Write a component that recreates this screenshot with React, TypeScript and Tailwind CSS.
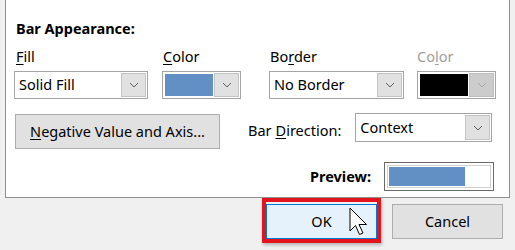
import React from 'react';

const Chevron = ({ disabled }: { disabled?: boolean }) => (
  <svg width="10" height="6" viewBox="0 0 10 6" fill="none">
    <path d="M1 1 L5 5 L9 1" stroke={disabled ? '#a8a8a8' : '#606060'} strokeWidth="1" />
  </svg>
);

const DropButton = ({ disabled }: { disabled?: boolean }) => (
  <div
    className={`w-[25px] h-full flex items-center justify-center border ${
      disabled ? 'bg-[#cccccc] border-[#bfbfbf]' : 'bg-[#e1e1e1] border-[#c4c4c4]'
    }`}
  >
    <Chevron disabled={disabled} />
  </div>
);

const TextSelect = ({ value, className }: { value: string; className: string }) => (
  <div className={`flex items-stretch border border-[#a5a5a5] bg-white p-[1px] ${className}`}>
    <div className="flex-1 flex items-center pl-[3px] text-[14.5px] text-black">{value}</div>
    <DropButton />
  </div>
);

const ColorSelect = ({ color, disabled }: { color: string; disabled?: boolean }) => (
  <div className="flex items-stretch border border-[#a5a5a5] bg-white p-[1px] h-[28px] w-[79px]">
    <div className="flex-1 border border-white" style={{ backgroundColor: color }} />
    <DropButton disabled={disabled} />
  </div>
);

export default function App() {
  return (
    <div
      className="relative w-[515px] h-[250px] bg-[#f0f0f0] overflow-hidden text-black"
      style={{ fontFamily: '"Noto Sans", "Open Sans", sans-serif' }}
    >
      {/* main panel */}
      <div className="ml-[5px] w-[505px] h-[198px] bg-white border-x border-b border-[#8f8f8f] flex flex-col">
        <div className="pl-[10px] pt-[17px] text-[14.5px] font-bold leading-[22px]">Bar Appearance:</div>

        {/* labels */}
        <div className="flex pl-[8px] mt-[6px] text-[14.5px] leading-[22px]">
          <div className="w-[134px] pl-[2px]"><span className="underline underline-offset-2">F</span>ill</div>
          <div className="w-[78px] ml-[14px] pl-[1px]"><span className="underline underline-offset-2">C</span>olor</div>
          <div className="w-[135px] ml-[28px] pl-[2px]">Bo<span className="underline underline-offset-2">r</span>der</div>
          <div className="w-[79px] ml-[13px] pl-[1px] text-[#a0a0a0]">Co<span className="underline underline-offset-2">l</span>or</div>
        </div>

        {/* selects */}
        <div className="flex pl-[8px] mt-[4px]">
          <TextSelect value="Solid Fill" className="w-[134px] h-[28px]" />
          <div className="ml-[14px]"><ColorSelect color="#6290c5" /></div>
          <TextSelect value="No Border" className="w-[135px] h-[28px] ml-[28px]" />
          <div className="ml-[13px]"><ColorSelect color="#000000" disabled /></div>
        </div>

        {/* negative / direction */}
        <div className="flex items-start pl-[9px] mt-[14px]">
          <button className="w-[205px] h-[35px] bg-[#e1e1e1] border border-[#adadad] text-[14.5px] flex items-center justify-center mt-[1px]">
            <span><span className="underline underline-offset-2">N</span>egative Value and Axis...</span>
          </button>
          <div className="ml-[28px] h-[29px] flex items-center text-[14.5px] mt-[3px]">
            Bar <span className="underline underline-offset-2 ml-[4px]">D</span>irection:
          </div>
          <TextSelect value="Context" className="w-[137px] h-[29px] ml-[14px]" />
        </div>

        {/* preview */}
        <div className="flex items-center justify-end pr-[15px] mt-[13px]">
          <div className="text-[14.5px] font-bold mr-[13px]">Preview:</div>
          <div className="w-[110px] h-[29px] border border-[#6b6b6b] p-[2px] bg-white">
            <div className="w-full h-full border border-[#d0d0d0] p-[1px]">
              <div className="w-[76px] h-full bg-[#6290c5]" />
            </div>
          </div>
        </div>
      </div>

      {/* dialog buttons */}
      <div className="flex justify-end pr-[12px] mt-[6px] gap-[15px]">
        <button className="w-[111px] h-[35px] bg-[#e5f1fb] border border-[#0078d7] text-[14.5px] flex items-center justify-center">
          OK
        </button>
        <button className="w-[111px] h-[35px] bg-[#e1e1e1] border border-[#adadad] text-[14.5px] flex items-center justify-center">
          Cancel
        </button>
      </div>

      {/* red annotation */}
      <div className="absolute left-[262px] top-[198px] w-[119px] h-[45px] border-[4px] border-[#e3141c] shadow-[1px_2px_3px_rgba(0,0,0,0.25)]" />

      {/* mouse cursor */}
      <svg className="absolute left-[349px] top-[207px]" width="20" height="30" viewBox="0 0 20 30">
        <path
          d="M1 1 L1 24 L6.5 18.5 L10.5 27.5 L14 26 L10 17.5 L17.5 17.5 Z"
          fill="white"
          stroke="black"
          strokeWidth="1"
          strokeLinejoin="miter"
        />
      </svg>
    </div>
  );
}
